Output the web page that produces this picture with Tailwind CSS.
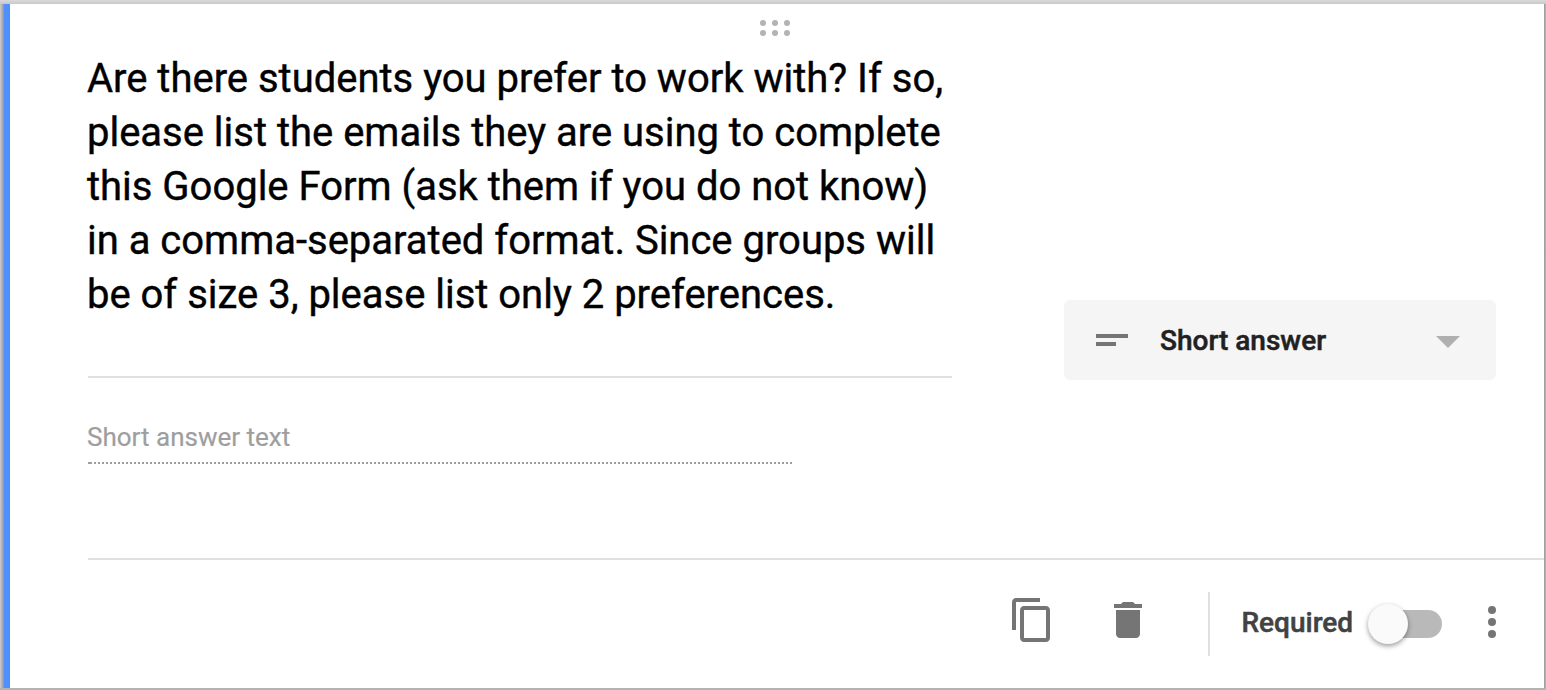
<!DOCTYPE html>
<html lang="en">
<head>
<meta charset="utf-8">
<title>Form question</title>
<script src="https://cdn.jsdelivr.net/npm/@tailwindcss/browser@4"></script>
</head>
<body class="font-['Roboto',sans-serif] w-[1546px] h-[690px] overflow-hidden flex flex-col bg-white">
  <div class="h-1 shrink-0 bg-linear-to-b from-[#dadada] to-[#c8c8c8]"></div>
  <div class="h-[684px] shrink-0 flex">
    <div class="w-1 shrink-0 bg-linear-to-r from-[#cdcbd3] to-[#98939a]"></div>
    <div class="w-1.5 shrink-0 bg-[#4d90fe]"></div>
    <main class="w-[1534px] shrink-0 flex flex-col bg-white pl-[78px]">
      <div class="h-12 shrink-0 pt-4 pl-[672px]">
        <svg class="block" width="30" height="16" viewBox="0 0 30 16" fill="#b3b3b3"><circle cx="3" cy="3" r="3"/><circle cx="15" cy="3" r="3"/><circle cx="27" cy="3" r="3"/><circle cx="3" cy="13" r="3"/><circle cx="15" cy="13" r="3"/><circle cx="27" cy="13" r="3"/></svg>
      </div>
      <div class="h-[506px] shrink-0 flex">
        <div class="w-[864px] shrink-0">
          <h1 class="h-[326px] border-b-2 border-[#e0e0e0] -indent-px text-[40px] leading-[54px] tracking-[-0.01px] text-black whitespace-nowrap [-webkit-text-stroke:0.4px_#000]"><span class="block">Are there students you prefer to work with? If so,</span><span class="block">please list the emails they are using to complete</span><span class="block">this Google Form (ask them if you do not know)</span><span class="block">in a comma-separated format. Since groups will</span><span class="block">be of size 3, please list only 2 preferences.</span></h1>
          <p class="w-[704px] h-[84px] pt-[39px] -indent-px text-[26px] leading-[40px] text-[#9e9e9e] whitespace-nowrap [-webkit-text-stroke:0.2px_#9e9e9e]">Short answer text</p>
          <div class="w-[704px] h-0.5 flex">
            <div class="w-0.5 bg-[#9e9e9e]"></div>
            <div class="flex-1 bg-[repeating-linear-gradient(90deg,#9e9e9e_0_2px,transparent_2px_4px)]"></div>
          </div>
        </div>
        <button class="ml-[112px] mt-[248px] w-[432px] h-20 rounded-md bg-[#f5f5f5] flex items-center pl-8 pr-9">
          <svg class="block" width="32" height="12" viewBox="0 0 32 12" fill="#757575"><path d="M0 0h32v4H0zM0 8h20v4H0z"/></svg>
          <span class="ml-8 pt-0.5 text-[28px] leading-8 font-medium text-[#212121] whitespace-nowrap [-webkit-text-stroke:0.5px_#212121]">Short answer</span>
          <svg class="block ml-auto mt-1" width="24" height="12" viewBox="0 0 24 12" fill="#b0b0b0"><path d="M0 0h24L12 12z"/></svg>
        </button>
      </div>
      <footer class="h-[130px] shrink-0 border-t-2 border-[#e0e0e0] flex pl-[920px] pt-8">
        <svg class="block mt-1" width="48" height="48" viewBox="0 0 24 24" fill="#757575"><path d="M16 1H4c-1.1 0-2 .9-2 2v14h2V3h12V1zm3 4H8c-1.1 0-2 .9-2 2v14c0 1.1.9 2 2 2h11c1.1 0 2-.9 2-2V7c0-1.1-.9-2-2-2zm0 16H8V7h11v14z"/></svg>
        <svg class="block mt-1 ml-12" width="48" height="48" viewBox="0 0 24 24" fill="#757575"><path d="M6 19c0 1.1.9 2 2 2h8c1.1 0 2-.9 2-2V7H6v12zM19 4h-3.5l-1-1h-5l-1 1H5v2h14V4z"/></svg>
        <div class="ml-14 w-0.5 h-16 bg-[#e0e0e0]"></div>
        <span class="ml-[31px] mt-[15px] w-[127px] indent-[0.5px] text-[28px] leading-8 font-medium text-[#424242] [-webkit-text-stroke:0.5px_#424242]">Required</span>
        <div class="mt-[18px] ml-0.5 w-[72px] h-7 rounded-full bg-[#b9b9b9] relative">
          <div class="absolute -left-0.5 -top-1.5 size-10 rounded-full bg-[#fafafa] shadow-[0_2px_5px_rgba(0,0,0,0.4)]"></div>
        </div>
        <svg class="block mt-[14px] ml-[46px]" width="8" height="32" viewBox="0 0 8 32" fill="#757575"><circle cx="4" cy="4" r="4"/><circle cx="4" cy="16" r="4"/><circle cx="4" cy="28" r="4"/></svg>
      </footer>
    </main>
    <div class="w-2 shrink-0 bg-linear-to-r from-[#98979f] from-0% to-[#b8b8c2] to-25%"></div>
  </div>
  <div class="h-0.5 shrink-0 bg-[#b3b3b3]"></div>
</body>
</html>
